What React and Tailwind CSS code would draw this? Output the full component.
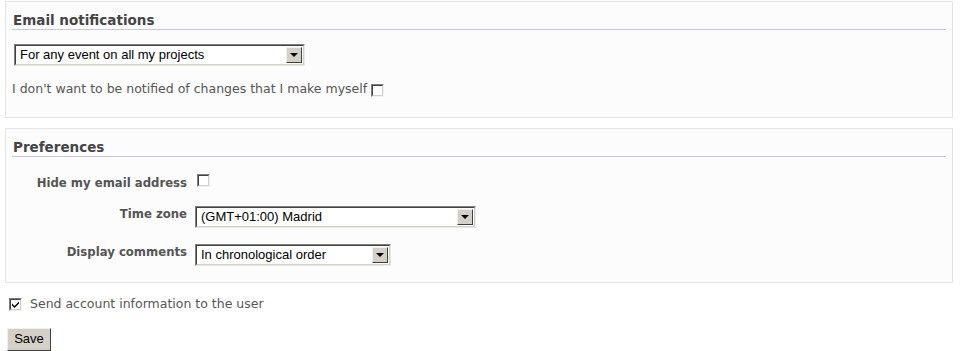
import React from "react";

const verdana = { fontFamily: '"DejaVu Sans", Verdana, sans-serif' };
const arial = { fontFamily: '"Liberation Sans", Arial, sans-serif' };

function Select({ text, width }) {
  return (
    <div
      className="flex h-[22px] items-stretch bg-white border-t border-l border-t-[#808080] border-l-[#808080] border-b border-r border-b-[#e8e8e8] border-r-[#e8e8e8]"
      style={{ width }}
    >
      <div className="flex flex-1 items-stretch border-t border-l border-t-[#404040] border-l-[#404040] border-b border-r border-b-[#d4d0c8] border-r-[#d4d0c8]">
        <div className="flex-1 pl-[4px] text-[13px] leading-[18px] text-black" style={arial}>
          {text}
        </div>
        <div className="m-[1px] flex w-[16px] items-center justify-center bg-[#d4d0c8] border border-t-[#f0f0f0] border-l-[#f0f0f0] border-b-[#404040] border-r-[#404040]">
          <div className="h-0 w-0 border-l-[4px] border-r-[4px] border-t-[4px] border-l-transparent border-r-transparent border-t-black" />
        </div>
      </div>
    </div>
  );
}

function Checkbox({ checked }) {
  return (
    <div className="relative h-[13px] w-[13px] bg-white border border-t-[#808080] border-l-[#808080] border-b-[#f0f0f0] border-r-[#f0f0f0]">
      <div className="absolute inset-0 border border-t-[#404040] border-l-[#404040] border-b-[#d4d0c8] border-r-[#d4d0c8]" />
      {checked && (
        <svg className="absolute left-[1px] top-[1px]" width="9" height="9" viewBox="0 0 9 9">
          <path d="M1 3.5 L3.5 6 L8 1.5 L8 3.5 L3.5 8 L1 5.5 Z" fill="black" />
        </svg>
      )}
    </div>
  );
}

export default function App() {
  return (
    <div className="w-[961px] h-[351px] bg-white text-[#555]" style={verdana}>
      <div className="pl-[5px] pr-[8px] pt-[1px]">
        {/* Email notifications */}
        <div className="h-[117px] border border-[#e4e4e4] bg-[#fcfcfc] px-[6px]">
          <div className="mt-[10px] border-b border-[#c8c8d8] pl-[1px] text-[13.5px] font-bold leading-[17px] text-[#444]">
            Email notifications
          </div>
          <div className="mt-[14px] pl-[2px]">
            <Select text="For any event on all my projects" width={291} />
          </div>
          <div className="mt-[14px] flex items-center text-[12.5px] leading-[16px] text-[#555]">
            <span>I don't want to be notified of changes that I make myself</span>
            <span className="ml-[4px] mt-[4px]">
              <Checkbox />
            </span>
          </div>
        </div>

        {/* Preferences */}
        <div className="mt-[10px] h-[155px] border border-[#e4e4e4] bg-[#fcfcfc] px-[6px]">
          <div className="mt-[10px] border-b border-[#c8c8d8] pl-[1px] text-[13.5px] font-bold leading-[17px] text-[#444]">
            Preferences
          </div>
          <div className="mt-[17px] flex items-start">
            <div className="w-[175px] text-right text-[11.7px] font-bold leading-[14px] text-[#555] mt-[2px]">
              Hide my email address
            </div>
            <div className="ml-[10px]">
              <Checkbox />
            </div>
          </div>
          <div className="mt-[16px] flex items-start">
            <div className="w-[175px] text-right text-[11.7px] font-bold leading-[14px] text-[#555] mt-[1px]">
              Time zone
            </div>
            <div className="ml-[8px]">
              <Select text="(GMT+01:00) Madrid" width={281} />
            </div>
          </div>
          <div className="mt-[16px] flex items-start">
            <div className="w-[175px] text-right text-[11.7px] font-bold leading-[14px] text-[#555] mt-[1px]">
              Display comments
            </div>
            <div className="ml-[8px]">
              <Select text="In chronological order" width={196} />
            </div>
          </div>
        </div>
      </div>

      <div className="mt-[14px] flex items-center pl-[9px]">
        <Checkbox checked />
        <span className="ml-[8px] text-[12.5px] leading-[14px] text-[#555]">Send account information to the user</span>
      </div>

      <div className="mt-[15px] pl-[7px]">
        <button
          className="h-[23px] w-[44px] bg-[#d4d0c8] text-[13px] leading-[18px] text-black border border-t-[#f0f0f0] border-l-[#f0f0f0] border-b-[#404040] border-r-[#404040]"
          style={arial}
        >
          Save
        </button>
      </div>
    </div>
  );
}
